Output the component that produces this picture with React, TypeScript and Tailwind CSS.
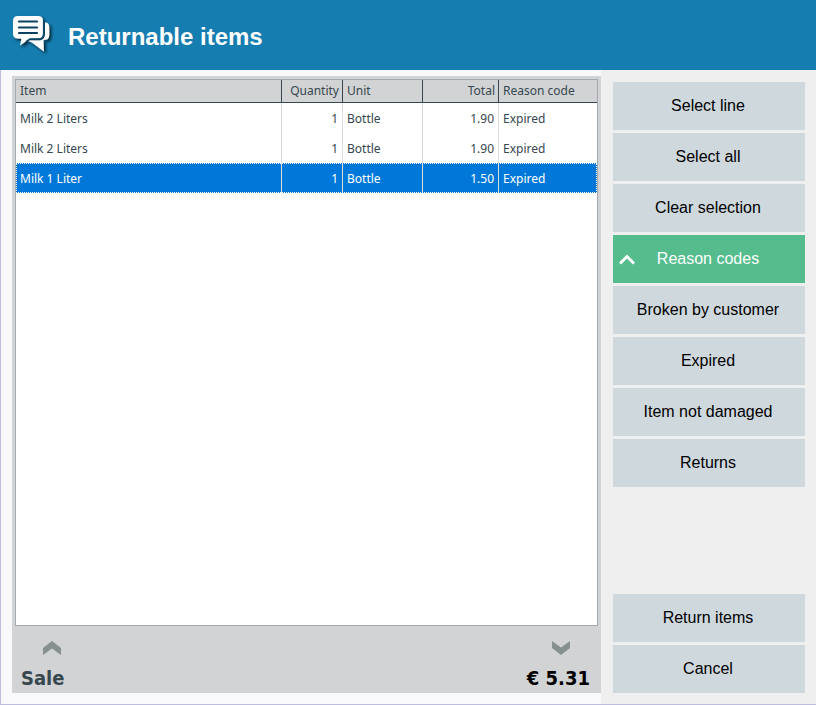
import type { ReactNode } from "react";

type Line = { item: string; quantity: number; unit: string; total: string; reason: string };

const lines: Line[] = [
  { item: "Milk 2 Liters", quantity: 1, unit: "Bottle", total: "1.90", reason: "Expired" },
  { item: "Milk 2 Liters", quantity: 1, unit: "Bottle", total: "1.90", reason: "Expired" },
  { item: "Milk 1 Liter", quantity: 1, unit: "Bottle", total: "1.50", reason: "Expired" },
];
const selectedLine = 2;

function ActionButton({ children, active = false }: { children: ReactNode; active?: boolean }) {
  return (
    <button
      type="button"
      className={
        active
          ? "relative h-12 w-full bg-[#55bd8d] pr-0.5 text-center text-base text-white"
          : "relative h-12 w-full bg-[#cfd8dd] pr-0.5 text-center text-base text-black"
      }
    >
      {active && (
        <svg className="absolute left-1.5 top-[19px] h-3 w-4" viewBox="0 0 16 12" fill="none" stroke="white" strokeWidth="3" aria-hidden="true">
          <path d="M1 9.500 8 2.500l7 7" />
        </svg>
      )}
      {children}
    </button>
  );
}

function MessagesIcon() {
  return (
    <svg className="h-14 w-14 shrink-0" viewBox="0 0 56 56" aria-hidden="true">
      <defs>
        <filter id="shade" x="-20%" y="-20%" width="150%" height="150%">
          <feDropShadow dx="2" dy="2" stdDeviation="1.500" floodColor="#03202f" floodOpacity="1" />
        </filter>
      </defs>
      <g fill="white" filter="url(#shade)">
        <path d="M45 22.500c2.500 0 4.200 1.500 4.200 4V35.500c0 3-2 4.500-5.700 4.500l.3 11.500L32 42.500 27 40.500h11.500c4.500 0 6.500-2.500 6.500-6.500z" />
        <path d="M18 16h20q5 0 5 5v12.500q0 5-5 5H30L20 45.500 21.500 38.500H18q-5 0-5-5V21q0-5 5-5z" />
      </g>
      <path d="M43.700 21v13q0 5-5.200 5H30L26 41.700" fill="none" stroke="#0d4a6c" strokeWidth="1.600" />
      <path d="M19 21.500h18M19 27.500h18M19 33h18" stroke="#0b4160" strokeWidth="2.200" strokeLinecap="round" />
    </svg>
  );
}

export default function App() {
  return (
    <div className="flex min-h-screen flex-col bg-[#f9f9fc] font-['Liberation_Sans',Arial,sans-serif]">
      <header className="flex h-[70px] items-start bg-[#167db0]">
        <MessagesIcon />
        <h1 className="pl-3 pt-[21px] text-2xl font-bold leading-8 text-white">Returnable items</h1>
      </header>

      <div className="flex flex-1 border-b border-l border-[#bdbede]">
        <main className="flex min-w-0 flex-1 flex-col pb-[11px] pl-[11px] pt-1.5">
          <div className="flex flex-1 flex-col bg-[#d1d3d4] p-[3px] font-['Noto_Sans',Tahoma,sans-serif]">
            <div className="flex-1 border border-[#a3a8b2] bg-white">
              <table className="w-full table-fixed border-separate border-spacing-0 text-xs text-[#37474f]">
                <colgroup>
                  <col />
                  <col className="w-[61px]" />
                  <col className="w-20" />
                  <col className="w-[76px]" />
                  <col className="w-[98px]" />
                </colgroup>
                <thead>
                  <tr className="h-[23px] bg-[#d1d3d4] text-left *:border-b *:border-r *:border-[#37474f] *:px-1 *:py-0 *:font-normal *:last:border-r-0">
                    <th scope="col">Item</th>
                    <th scope="col" className="pr-[3px]! text-right">Quantity</th>
                    <th scope="col">Unit</th>
                    <th scope="col" className="pr-[3px]! text-right">Total</th>
                    <th scope="col">Reason code</th>
                  </tr>
                </thead>
                <tbody>
                  {lines.map((line, index) => (
                    <tr
                      key={index}
                      aria-selected={index === selectedLine}
                      className={
                        index === selectedLine
                          ? "h-[30px] bg-[#0078d9] text-white outline-1 -outline-offset-1 outline-dotted outline-white *:border-r *:border-[#dcdcdc] *:px-1 *:pb-0 *:pt-0.5 *:last:border-r-0"
                          : "h-[30px] *:border-r *:border-[#dcdcdc] *:px-1 *:pb-0 *:pt-0.5 *:last:border-r-0"
                      }
                    >
                      <td>{line.item}</td>
                      <td className="text-right">{line.quantity}</td>
                      <td>{line.unit}</td>
                      <td className="text-right">{line.total}</td>
                      <td>{line.reason}</td>
                    </tr>
                  ))}
                </tbody>
              </table>
            </div>

            <div className="flex h-10 items-center justify-between px-7 pt-1">
              <button type="button" aria-label="Scroll up">
                <svg className="h-3.5 w-[18px]" viewBox="0 0 18 14" fill="#879091" aria-hidden="true">
                  <path d="M0 7 9 0l9 7v7L9 7.500 0 14z" />
                </svg>
              </button>
              <button type="button" aria-label="Scroll down">
                <svg className="h-3.5 w-[18px]" viewBox="0 0 18 14" fill="#879091" aria-hidden="true">
                  <path d="M0 0l9 6.500L18 0v7l-9 7-9-7z" />
                </svg>
              </button>
            </div>
            <div className="flex h-6 items-center justify-between pl-1.5 pr-2 font-['DejaVu_Sans_Condensed','DejaVu_Sans',sans-serif] text-xl font-bold leading-6 text-[#37474f]">
              <span>Sale</span>
              <span className="text-black">€ 5.31</span>
            </div>
          </div>
        </main>

        <aside className="flex w-[215px] shrink-0 flex-col justify-between bg-[#efefef] pb-[11px] pl-3 pr-[11px] pt-3">
          <div className="flex flex-col gap-[3px]">
            <ActionButton>Select line</ActionButton>
            <ActionButton>Select all</ActionButton>
            <ActionButton>Clear selection</ActionButton>
            <ActionButton active>Reason codes</ActionButton>
            <ActionButton>Broken by customer</ActionButton>
            <ActionButton>Expired</ActionButton>
            <ActionButton>Item not damaged</ActionButton>
            <ActionButton>Returns</ActionButton>
          </div>
          <div className="flex flex-col gap-[3px]">
            <ActionButton>Return items</ActionButton>
            <ActionButton>Cancel</ActionButton>
          </div>
        </aside>
      </div>
    </div>
  );
}
